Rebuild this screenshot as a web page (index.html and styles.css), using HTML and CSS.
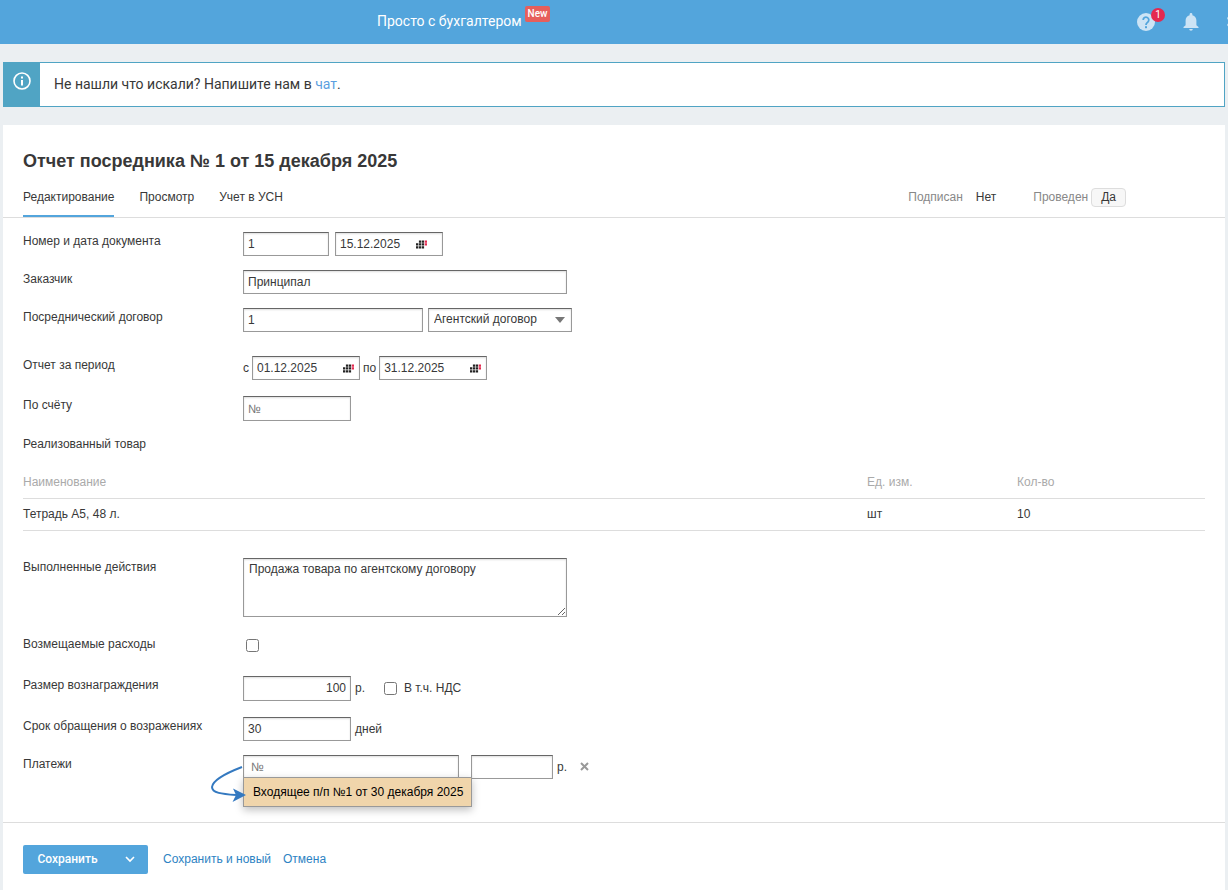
FILE: index.html
```html
<!DOCTYPE html>
<html lang="ru">
<head>
    <meta charset="UTF-8">
    <meta name="viewport" content="width=device-width, initial-scale=1.0">
    <title>Отчет посредника № 1 от 15 декабря 2025</title>
    <link rel="stylesheet" href="styles.css">
</head>
<body>
    <svg class="sprite" aria-hidden="true">
        <symbol id="calendar" viewBox="0 0 11 9">
            <path fill="#222" d="M0 3.300h2.300v2.300H0zM0 6.200h2.300v2.300H0zM2.900 .4h2.300v2.300H2.900zM2.900 3.300h2.300v2.300H2.900zM2.900 6.200h2.300v2.300H2.900zM5.800 .4h2.300v2.300H5.800zM5.800 3.300h2.300v2.300H5.800zM5.800 6.200h2.300v2.300H5.800z"/>
            <path fill="#e4294f" d="M8.700 .4H11v2.300H8.700zM8.700 3.300H11v2.300H8.700z"/>
        </symbol>
    </svg>

    <header class="topbar">
        <a href="#" class="topbar-link">Просто с бухгалтером</a>
        <span class="badge-new">New</span>
        <div class="topbar-icons">
            <button type="button" class="icon-btn" aria-label="Помощь">
                <svg width="18" height="18" viewBox="0 0 18 18">
                    <circle cx="9" cy="9" r="9" fill="#cde4f5"/>
                    <path d="M6.200 7a2.800 2.800 0 1 1 4.500 2.200C9.700 10 9 10.400 9 12" fill="none" stroke="#53a5dc" stroke-width="1.800"/>
                    <rect x="8" y="13.200" width="2" height="2" fill="#53a5dc"/>
                </svg>
                <span class="counter">1</span>
            </button>
            <button type="button" class="icon-btn" aria-label="Уведомления">
                <svg width="16" height="18" viewBox="0 0 16 18">
                    <path d="M6.600 1.400a1.400 1.400 0 0 1 2.800 0v.8C12 2.800 13.400 4.900 13.400 7.500v4.700L15.500 14v1H.5v-1l2.100-1.800V7.500C2.600 4.900 4 2.800 6.600 2.200zM6.200 16h3.600a1.800 1.800 0 0 1-3.600 0z" fill="#cde4f5"/>
                </svg>
            </button>
            <button type="button" class="icon-btn" aria-label="Настройки">
                <svg width="18" height="18" viewBox="0 0 18 18">
                    <path d="M0 5l3-3 4 1 1-3h3l1 3 3-1 3 4-2 3 2 3-3 4-3-1-1 3H8l-1-3-4 1-3-4 2-3z" fill="#cde4f5"/>
                </svg>
            </button>
        </div>
    </header>

    <div class="notice">
        <div class="notice-icon">
            <svg width="18" height="18" viewBox="0 0 18 18">
                <circle cx="9" cy="9" r="8" fill="none" stroke="#fff" stroke-width="1.600"/>
                <path d="M8 4.500h2v2H8zM8 8h2v5.500H8z" fill="#fff"/>
            </svg>
        </div>
        <p class="notice-text">Не нашли что искали? Напишите нам в <a href="#">чат</a>.</p>
    </div>

    <main class="panel">
        <h1 class="title">Отчет посредника № 1 от 15 декабря 2025</h1>

        <div class="tabs-row">
            <nav class="tabs">
                <a href="#" class="tab active">Редактирование</a>
                <a href="#" class="tab">Просмотр</a>
                <a href="#" class="tab">Учет в УСН</a>
            </nav>
            <div class="statuses">
                <span class="status-name">Подписан</span>
                <button type="button" class="status-btn">Нет</button>
                <span class="status-name posted">Проведен</span>
                <button type="button" class="status-btn on">Да</button>
            </div>
        </div>

        <form class="form">
            <div class="row">
                <label for="number">Номер и дата документа</label>
                <div class="fields">
                    <input type="text" class="input w-number" id="number" value="1">
                    <div class="date">
                        <input type="text" class="date-first" value="15.12.2025" aria-label="Дата документа">
                        <button type="button" aria-label="Календарь"><svg width="11" height="9"><use href="#calendar"/></svg></button>
                    </div>
                </div>
            </div>

            <div class="row">
                <label for="customer">Заказчик</label>
                <div class="fields">
                    <input type="text" class="input w-wide" id="customer" value="Принципал">
                </div>
            </div>

            <div class="row row-contract">
                <label for="contract">Посреднический договор</label>
                <div class="fields">
                    <input type="text" class="input w-contract" id="contract" value="1">
                    <div class="select">
                        <select aria-label="Вид договора">
                            <option>Агентский договор</option>
                        </select>
                        <svg width="10" height="6" viewBox="0 0 10 6"><path d="M0 0h10L5 6z" fill="#777"/></svg>
                    </div>
                </div>
            </div>

            <div class="row row-period">
                <label for="from">Отчет за период</label>
                <div class="fields period">
                    <span>с</span>
                    <div class="date">
                        <input type="text" id="from" value="01.12.2025">
                        <button type="button" aria-label="Календарь"><svg width="11" height="9"><use href="#calendar"/></svg></button>
                    </div>
                    <span>по</span>
                    <div class="date">
                        <input type="text" value="31.12.2025" aria-label="По дату">
                        <button type="button" aria-label="Календарь"><svg width="11" height="9"><use href="#calendar"/></svg></button>
                    </div>
                </div>
            </div>

            <div class="row">
                <label for="invoice">По счёту</label>
                <div class="fields">
                    <input type="text" class="input w-short" id="invoice" placeholder="№">
                </div>
            </div>

            <h2 class="goods-title">Реализованный товар</h2>
            <table class="goods">
                <thead>
                    <tr>
                        <th>Наименование</th>
                        <th class="col-side">Ед. изм.</th>
                        <th class="col-qty">Кол-во</th>
                    </tr>
                </thead>
                <tbody>
                    <tr>
                        <td>Тетрадь А5, 48 л.</td>
                        <td>шт</td>
                        <td>10</td>
                    </tr>
                </tbody>
            </table>

            <div class="row row-actions">
                <label for="actions">Выполненные действия</label>
                <textarea class="input w-wide" id="actions">Продажа товара по агентскому договору</textarea>
            </div>

            <div class="row row-expenses">
                <label for="expenses">Возмещаемые расходы</label>
                <div class="fields">
                    <input type="checkbox" id="expenses">
                </div>
            </div>

            <div class="row row-reward">
                <label for="reward">Размер вознаграждения</label>
                <div class="fields">
                    <input type="text" class="input w-short right" id="reward" value="100">
                    <span class="unit">р.</span>
                    <input type="checkbox" class="vat" id="vat">
                    <label for="vat">В т.ч. НДС</label>
                </div>
            </div>

            <div class="row">
                <label for="term">Срок обращения о возражениях</label>
                <div class="fields">
                    <input type="text" class="input w-short" id="term" value="30">
                    <span class="unit">дней</span>
                </div>
            </div>

            <div class="row row-payment">
                <label for="payment">Платежи</label>
                <div class="fields">
                    <div class="payment">
                        <input type="text" class="input w-payment" id="payment" placeholder="№">
                        <svg class="arrow" width="38" height="42" viewBox="0 0 38 42">
                            <path d="M33 6C20 11 4 18 3 26C3 32 13 33 27 34" fill="none" stroke="#3479c0" stroke-width="2"/>
                            <path d="M37 34L24 27.500L27 34L23.500 41z" fill="#3479c0"/>
                        </svg>
                        <a href="#" class="suggest">Входящее п/п №1 от 30 декабря 2025</a>
                    </div>
                    <input type="text" class="input w-sum" aria-label="Сумма">
                    <span class="unit">р.</span>
                    <button type="button" class="remove" aria-label="Удалить">
                        <svg width="9" height="9" viewBox="0 0 9 9"><path d="M1 1l7 7M8 1L1 8" stroke="#999" stroke-width="2"/></svg>
                    </button>
                </div>
            </div>
        </form>

        <footer class="actions">
            <div class="save">
                <button type="button" class="save-main">Сохранить</button>
                <button type="button" class="save-more" aria-label="Ещё">
                    <svg width="10" height="7" viewBox="0 0 10 7"><path d="M1 1l4 4 4-4" fill="none" stroke="#fff" stroke-width="1.600"/></svg>
                </button>
            </div>
            <a href="#">Сохранить и новый</a>
            <a href="#">Отмена</a>
        </footer>
    </main>
</body>
</html>
```
FILE: styles.css
```css
:root {
    --primary: #53a5dc;
    --notice: #50a4c4;
    --link: #2d83c3;
    --background: #ebeff2;
    --line: #ddd;
    --text: #383838;
    --text-light: #888;
}

* {
    box-sizing: border-box;
    margin: 0;
    padding: 0;
}

body {
    font-family: "Liberation Sans", Arial, sans-serif;
    font-size: 12px;
    line-height: 18px;
    color: var(--text);
    background: var(--background);
    min-height: 100vh;
    display: flex;
    flex-direction: column;
}

a {
    color: var(--link);
    text-decoration: none;
}

button,
input,
select,
textarea {
    font: inherit;
    color: inherit;
}

button {
    border: none;
    background: none;
    cursor: pointer;
}

.sprite {
    display: none;
}

/* Top bar */
.topbar {
    display: flex;
    align-items: flex-start;
    height: 44px;
    padding-left: 377px;
    background: var(--primary);
    font-family: Roboto, sans-serif;
    overflow: hidden;
}

.topbar-link {
    margin-top: 12px;
    font-size: 14px;
    color: #fff;
}

.badge-new {
    margin: 6px 0 0 3px;
    padding: 0 3px;
    border-radius: 2px;
    background: #e65f5c;
    color: #fff;
    font-size: 10px;
    font-weight: 500;
    line-height: 16px;
}

.topbar-icons {
    display: flex;
    gap: 28px;
    margin: 13px -17px 0 auto;
}

.icon-btn {
    position: relative;
    height: 18px;
}

.icon-btn svg {
    display: block;
}

.counter {
    position: absolute;
    top: -5px;
    left: 14px;
    width: 14px;
    height: 14px;
    border-radius: 50%;
    background: #e4294f;
    color: #fff;
    font-size: 10px;
    line-height: 14px;
    text-align: center;
}

/* Notice */
.notice {
    display: flex;
    margin: 18px 3px;
    border: 1px solid var(--notice);
    background: #fff;
    font-family: Roboto, sans-serif;
    font-size: 14px;
}

.notice-icon {
    width: 36px;
    padding: 9px;
    background: var(--notice);
}

.notice-icon svg {
    display: block;
}

.notice-text {
    padding: 12px 14px 13px;
}

.notice-text a {
    color: #5c9fdf;
}

/* Panel */
.panel {
    flex: 1;
    margin: 0 3px;
    background: #fff;
}

.title {
    padding: 24px 20px 0;
    font-size: 18px;
    line-height: 24px;
}

.tabs-row {
    display: flex;
    justify-content: space-between;
    padding: 15px 99px 0 20px;
    border-bottom: 1px solid var(--line);
}

.tabs {
    display: flex;
    gap: 25px;
}

.tab {
    padding-bottom: 9px;
    border-bottom: 2px solid transparent;
    color: var(--text);
}

.tab.active {
    border-color: var(--primary);
}

.statuses {
    display: flex;
    align-items: flex-start;
}

.status-name {
    color: var(--text-light);
}

.status-name.posted {
    margin-left: 27px;
}

.status-btn {
    margin-left: 3px;
    padding: 0 9px;
    border: 1px solid transparent;
    border-radius: 4px;
    line-height: 17px;
}

.status-btn.on {
    border-color: #ddd;
    background: #f7f7f7;
}

/* Form */
.form {
    padding: 14px 20px 29px;
}

.row {
    display: grid;
    grid-template-columns: 220px 1fr;
    align-items: start;
    margin-bottom: 14px;
}

.row-contract {
    margin-bottom: 24px;
}

.row-period,
.row-reward {
    margin-bottom: 16px;
}

.row-actions {
    margin-top: 27px;
    margin-bottom: 18px;
}

.row-expenses {
    margin-bottom: 19px;
}

.fields {
    display: flex;
    align-items: center;
}

.row-expenses .fields {
    height: 22px;
}

.input,
.date,
.select {
    height: 24px;
    border: 1px solid #999;
    border-top-color: #666;
    background: #fff;
    box-shadow: inset 0 1px 2px #ddd;
}

.input {
    padding: 0 4px;
}

.input::placeholder {
    color: #777;
}

#invoice,
#reward {
    height: 25px;
}

textarea.input {
    display: block;
    height: 59px;
    padding: 1px 5px;
}

.w-number {
    width: 86px;
    margin-right: 6px;
}

.w-wide {
    width: 324px;
}

.w-contract {
    width: 180px;
    margin-right: 5px;
}

.w-short {
    width: 108px;
}

.w-payment {
    width: 216px;
    padding-left: 7px;
}

.w-sum {
    width: 82px;
    margin-left: 12px;
}

.right {
    text-align: right;
}

.date {
    display: flex;
    align-items: center;
    width: 108px;
}

.date input {
    width: 90px;
    height: 20px;
    padding-left: 4px;
    border: none;
    background: none;
}

.date .date-first {
    width: 80px;
}

.date button {
    display: flex;
}

.period {
    gap: 3px;
}

.select {
    position: relative;
    width: 144px;
}

.select select {
    width: 100%;
    height: 20px;
    padding: 0 5px;
    border: none;
    background: none;
    appearance: none;
}

.select svg {
    position: absolute;
    top: 8px;
    right: 6px;
    pointer-events: none;
}

.unit {
    margin-left: 4px;
}

input[type="checkbox"] {
    margin: 0 7px 0 3px;
}

.fields .vat {
    margin-left: 19px;
}

.payment {
    position: relative;
    display: flex;
}

.arrow {
    position: absolute;
    top: 6px;
    left: -34px;
    z-index: 2;
}

.suggest {
    position: absolute;
    top: 22px;
    left: 0;
    padding: 5px 8px 5px 9px;
    border: 1px solid #999;
    background: #f0d5ab;
    box-shadow: 0 3px 8px rgba(0,0,0,0.25);
    color: #000;
    white-space: nowrap;
}

.remove {
    margin-left: 13px;
}

/* Goods table */
.goods-title {
    font-size: 12px;
    font-weight: 400;
}

.goods {
    width: 100%;
    margin-top: 13px;
    border-collapse: collapse;
    table-layout: fixed;
}

.goods th,
.goods td {
    height: 32px;
    border-bottom: 1px solid var(--line);
    text-align: left;
    font-weight: 400;
}

.goods th {
    color: #aaa;
}

.col-side {
    width: 150px;
}

.col-qty {
    width: 188px;
}

/* Footer actions */
.actions {
    display: flex;
    align-items: center;
    padding: 22px 20px 16px;
    border-top: 1px solid var(--line);
}

.actions a {
    margin-left: 12px;
}

.save {
    display: flex;
    margin-right: 3px;
    border-radius: 2px;
    background: var(--primary);
    color: #fff;
    font-family: Roboto, sans-serif;
}

.save-main {
    width: 89px;
    height: 29px;
    font-weight: 500;
}

.save-more {
    width: 36px;
}
```
